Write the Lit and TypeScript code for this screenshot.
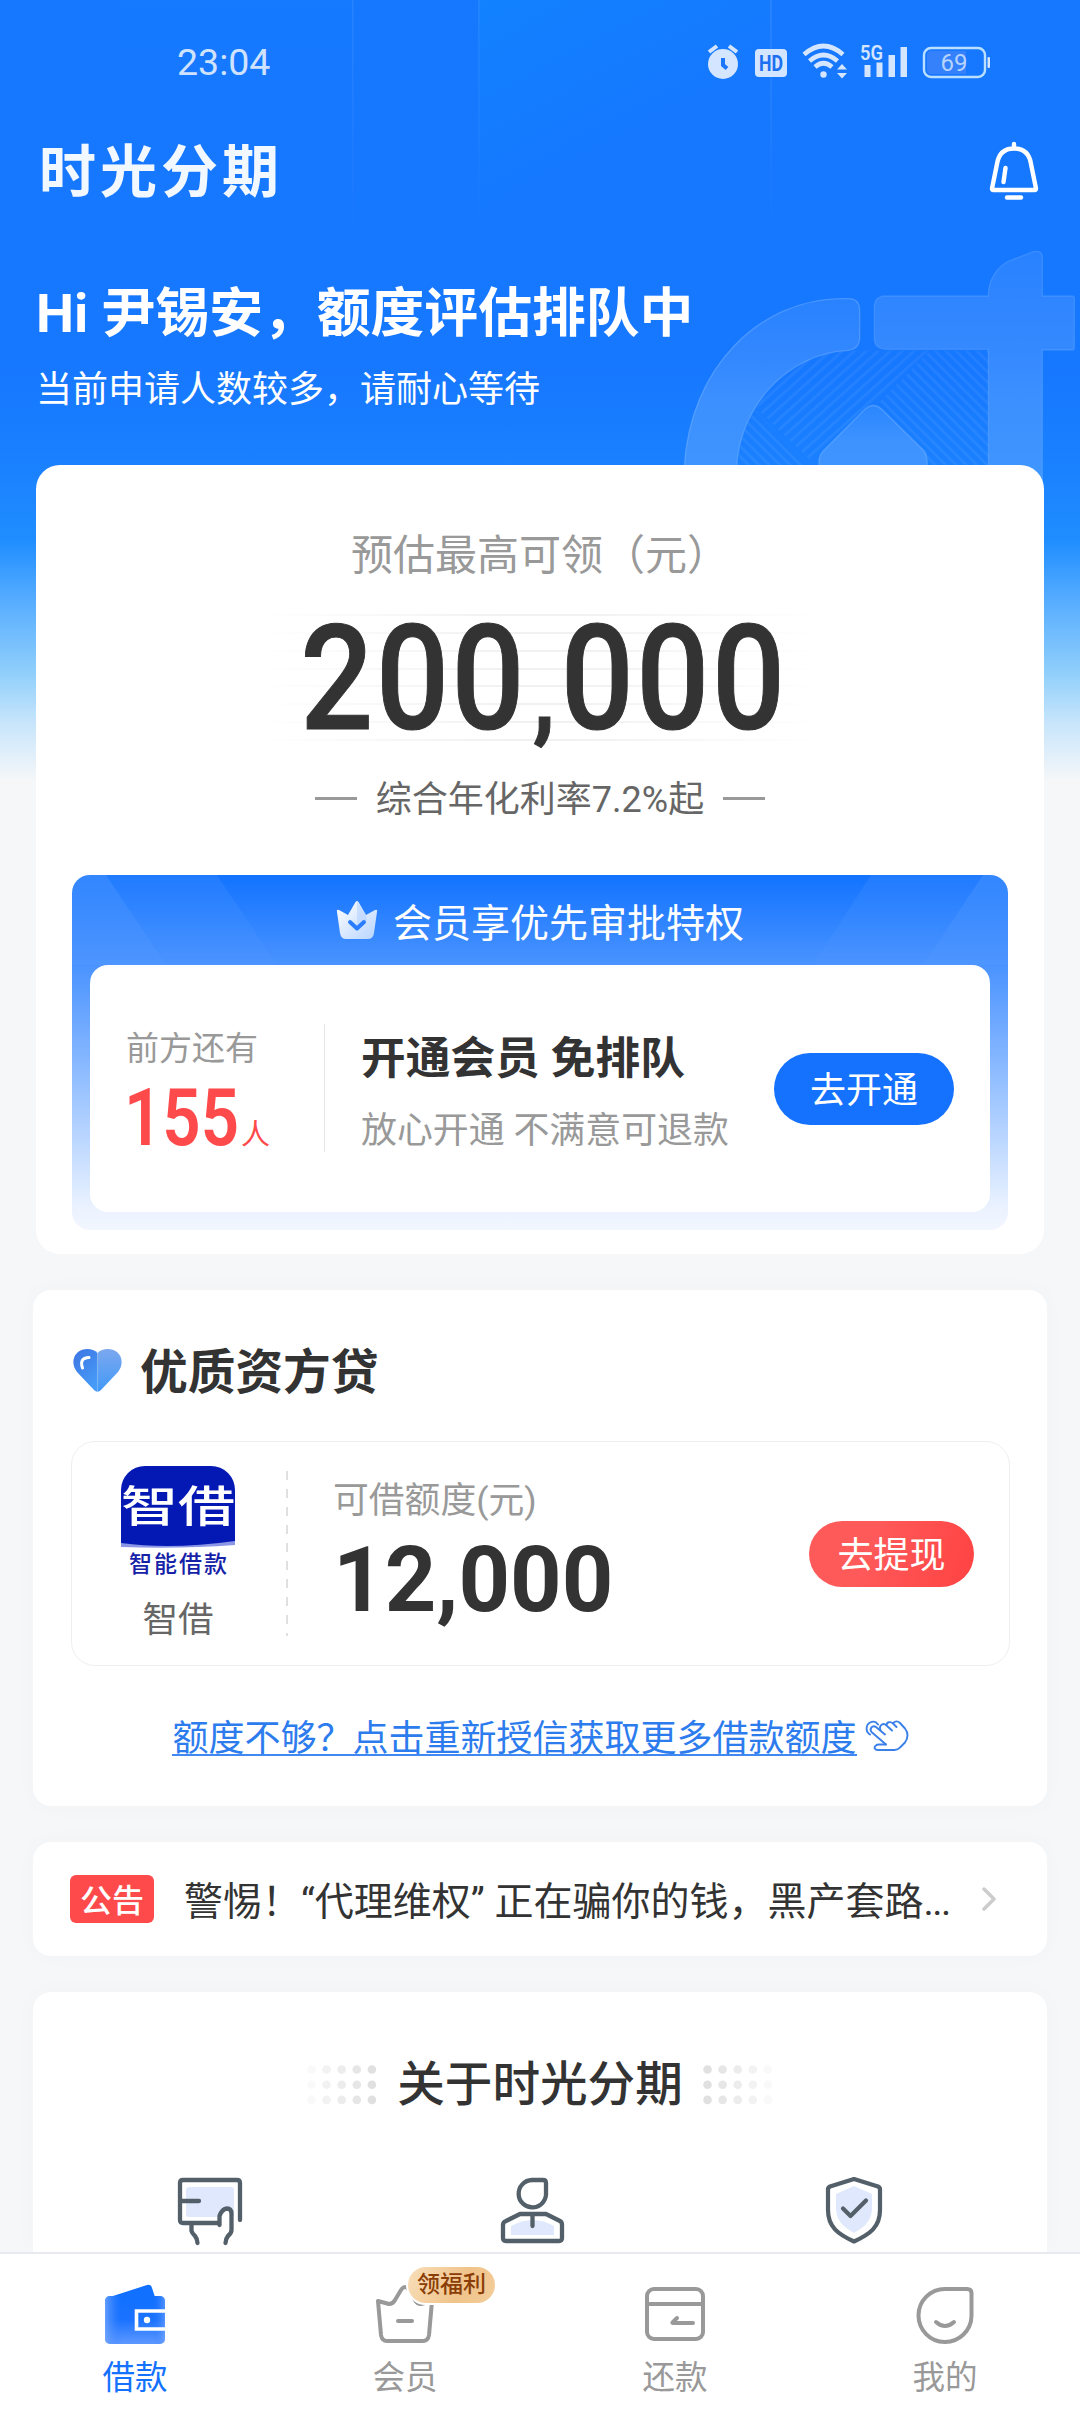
import { LitElement, html, css, svg } from "lit";
import { customElement, property } from "lit/decorators.js";

const statusIcons = svg`
<svg class="status-icons" width="284" height="42" viewBox="707 40 284 42" fill="#d3e5ff">
  <circle cx="723" cy="63" r="15"/>
  <path d="M709 51l8-6M737 51l-8-6" stroke="#d3e5ff" stroke-width="4" fill="none"/>
  <path d="M723 57v7l4 3.500" stroke="#1b76fb" stroke-width="4" fill="none"/>
  <rect x="755" y="48" width="32" height="28" rx="4"/>
  <text x="771" y="70" font-size="22" font-weight="700" fill="#1b6ff0" text-anchor="middle" textLength="24" lengthAdjust="spacingAndGlyphs">HD</text>
  <g fill="none" stroke="#d3e5ff" stroke-width="4.600">
    <path d="M804 53.500Q823.500 36.500 843 53.500"/>
    <path d="M809.500 60Q823.500 48 837.500 60"/>
    <path d="M815 66Q823.500 58.500 832 66"/>
  </g>
  <circle cx="823.500" cy="73.500" r="3.200"/>
  <path d="M842 63l5 5.500h-10zM842 77.500l5-5.500h-10z"/>
  <text x="860" y="59" font-size="21" font-weight="600" textLength="23" lengthAdjust="spacingAndGlyphs">5G</text>
  <rect x="864.500" y="64" width="6" height="12"/><rect x="876.500" y="61.500" width="6" height="14.500"/>
  <rect x="888.500" y="54" width="6.500" height="22"/><rect x="900.500" y="46" width="6.500" height="30"/>
  <rect x="924" y="47" width="61" height="29" rx="7" fill="none" stroke="#b9e0ff" stroke-width="2.400"/>
  <path d="M931 50h35v23h-35a4 4 0 0 1-4-4V54a4 4 0 0 1 4-4z" fill="#3580fb"/>
  <rect x="987.500" y="56" width="2.500" height="11" rx="1"/>
  <text x="954" y="70" font-size="24" text-anchor="middle" fill="#b4d4ff">69</text>
</svg>`;

const bell = svg`
<svg width="50" height="60" viewBox="0 0 50 60" fill="none" stroke="#fff" stroke-width="4.400" stroke-linecap="round" stroke-linejoin="round">
  <path d="M25 3v4M25 7.500C15 7.500 9.500 13 8 23L3 47.500q0 1.500 1.500 1.500h41q1.500 0 1.500-1.500L42 23C40.500 13 35 7.500 25 7.500Z"/>
  <path d="M16.500 27L14.500 41"/><path d="M18 56.500h14"/>
</svg>`;

const watermark = svg`
<svg class="watermark" width="440" height="300" viewBox="0 0 1320 900">
  <defs>
    <pattern id="up" width="24" height="24" patternUnits="userSpaceOnUse" patternTransform="rotate(-42)"><rect width="24" height="8" fill="#fff" opacity=".06"/></pattern>
    <pattern id="down" width="22" height="22" patternUnits="userSpaceOnUse" patternTransform="rotate(45)"><rect width="22" height="8" fill="#fff" opacity=".06"/></pattern>
    <linearGradient id="sheen" x1="0" y1="0" x2="0" y2="1"><stop offset="0" stop-color="#fff" stop-opacity=".08"/><stop offset=".6" stop-color="#fff" stop-opacity=".16"/><stop offset="1" stop-color="#fff" stop-opacity=".16"/></linearGradient>
  </defs>
  <path d="M350 535Q440 370 625 362H870L690 540L510 690Z" fill="url(#up)"/>
  <path d="M870 362H1045V705H862L852 665L710 525Z" fill="url(#down)"/>
  <path d="M345 540L505 705H295Q300 610 345 540Z" fill="url(#down)"/>
  <g fill="url(#sheen)" stroke="#7fb8ff" stroke-opacity=".42" stroke-width="4">
    <path d="M133 710C150 410 360 210 600 206H628Q659 208 659 240V325Q657 358 625 361C440 370 300 530 290 710"/>
    <path d="M537 710V688Q540 672 550 662L675 538Q700 515 725 538L852 662Q862 674 862 710"/>
    <path stroke-opacity=".28" d="M735 198H1045C1045 140 1080 105 1110 92L1180 65Q1207 60 1207 80V198H1298Q1303 198 1303 204V354Q1303 360 1297 360H1207V780H1045V358H737Q703 355 703 327V230Q703 200 735 198Z"/>
  </g>
</svg>`;

const memberCrown = svg`
<svg width="42" height="40" viewBox="0 0 42 40">
  <defs><linearGradient id="cr" x1="0" y1="0" x2="1" y2="1"><stop offset="0" stop-color="#fff"/><stop offset="1" stop-color="#b7d4ff"/></linearGradient></defs>
  <path d="M1 12Q0 9 3 10L12 15L19.500 2Q21 0 22.500 2L30 15L39 10Q42 9 41 12L38 33Q37 39 32 39H10Q5 39 4 33Z" fill="url(#cr)"/>
  <path d="M21 1L30 15L31 20L21 28Z" fill="#a9ccff" opacity=".45"/>
  <path d="M14 22L21 28.500L28 22" fill="none" stroke="#2a7dff" stroke-width="4" stroke-linecap="round" stroke-linejoin="round"/>
</svg>`;

const heart = svg`
<svg class="heart" width="49" height="43" viewBox="0 0 49 43">
  <defs>
    <linearGradient id="hl" x1="0" y1="0" x2=".6" y2="1"><stop offset="0" stop-color="#3d74e2"/><stop offset="1" stop-color="#479bf8"/></linearGradient>
    <linearGradient id="hr" x1="0" y1="0" x2="0" y2="1"><stop offset="0" stop-color="#7ba8ef"/><stop offset="1" stop-color="#4199f8"/></linearGradient>
  </defs>
  <path d="M24.500 4C20-1 10-1 5 3C-1 8-1 17 4 23L21 41Q24.500 44 24.500 42Z" fill="url(#hl)"/>
  <path d="M24.500 4C29-1 39-1 44 3C50 8 50 17 45 23L28 41Q24.500 44 24.500 42Z" fill="url(#hr)"/>
  <path d="M16 8.500Q6 9 9.500 19" fill="none" stroke="#fff" stroke-width="3" stroke-linecap="round"/>
</svg>`;

const hand = svg`
<svg width="44" height="32" viewBox="0 0 44 32" fill="none" stroke="#3a80e8" stroke-width="1.900" stroke-linecap="round" stroke-linejoin="round">
  <path d="M5 14.500C0.500 12 0.500 5 5 2.500C8 1 11 1.500 13 4.500"/>
  <path d="M21 24.500L6.500 12C4 9 7.500 4.500 11 7L20 14.500"/>
  <path d="M15.500 10C13.500 5 18.500 2.500 21.500 5.500L27 10.500M21.500 5.500C21.500 2 25.500 1 28 3.500L31.500 7M28 3.500C29.500 0.500 33 1 35 3L40 8.500C43.500 13 43 18 40 22.500L35 27.500Q33 30 29.500 30H13C9.500 30 8.500 27 11 25.500Q12 24.500 14 24.500H21"/>
</svg>`;

const aboutCard = svg`
<svg width="68" height="70" viewBox="0 0 68 70" fill="none" stroke="#535f69" stroke-width="4.300" stroke-linecap="round" stroke-linejoin="round">
  <rect x="9" y="10" width="48" height="30" rx="3" fill="#e0e8fd" stroke="none"/>
  <path d="M43 46H6Q3 46 3 43V6Q3 3 6 3H60Q63 3 63 6V43M3 24H22"/>
  <path d="M42.500 48V39Q45 32 50 31.500Q54.500 31.500 54.500 37V53Q54.500 56 51 59Q48.500 62 48.500 67V70H40Z" fill="#fff" stroke="none"/>
  <path d="M14.500 47V54Q15 56 18 59Q20.500 62 20.500 66M42.500 48V39Q45 32 50 31.500Q54.500 31.500 54.500 37V53Q54.500 56 51 59Q48.500 62 48.500 66"/>
</svg>`;

const aboutPerson = svg`
<svg width="66" height="68" viewBox="0 0 66 68" fill="none" stroke="#535f69" stroke-width="4.300" stroke-linecap="round" stroke-linejoin="round">
  <path d="M11 58V49Q33 37 54 49V58Z" fill="#e0e8fd" stroke="none"/>
  <path d="M32 3H43Q46 3 46 6V15.500A13.700 13.700 0 1 1 32 3Z"/>
  <path d="M20 37H46L60 44Q62 45 62 48V61Q62 64 59 64H6Q3 64 3 61V48Q3 45 6 44ZM32.500 39V49"/>
</svg>`;

const aboutShield = svg`
<svg width="62" height="70" viewBox="0 1 62 70" fill="none" stroke="#535f69" stroke-width="4.200" stroke-linecap="round" stroke-linejoin="round">
  <path d="M30 10L48 18V32C48 45 40 51 30 57C20 51 12 45 12 32V18Z" fill="#e0e8fd" stroke="none"/>
  <path d="M30 3L54 10.500Q56 11.500 56 13.500V34C56 51 46 58 30 65.500C14 58 4 51 4 34V13.500Q4 11.500 6 10.500Z"/>
  <path d="M19 32.500L26.500 40L42 24.500"/>
</svg>`;

const navIcons = {
  wallet: svg`
<svg width="60" height="60" viewBox="0 0 60 60">
  <defs>
    <linearGradient id="wg" x1="0" y1="0" x2="0" y2="1"><stop offset="0" stop-color="#1170ff"/><stop offset=".5" stop-color="#1a73ff"/><stop offset="1" stop-color="#5e98ff"/></linearGradient>
    <linearGradient id="ws" x1="0" y1="0" x2="1" y2="0"><stop offset="0" stop-color="#79a8ff" stop-opacity=".8"/><stop offset=".28" stop-color="#2a7bff" stop-opacity="0"/><stop offset=".8" stop-color="#2a7bff" stop-opacity="0"/><stop offset="1" stop-color="#79a8ff" stop-opacity=".6"/></linearGradient>
  </defs>
  <path d="M8 12L42 1Q46 0 47 4L50 13Z" fill="#1170ff"/>
  <rect y="12" width="60" height="48" rx="5" fill="url(#wg)"/><rect y="12" width="60" height="48" rx="5" fill="url(#ws)"/>
  <path d="M60 27H31.500V45H60" fill="none" stroke="#fff" stroke-width="3.600"/><circle cx="42" cy="36" r="3.200" fill="#fff"/>
</svg>`,
  crown: svg`
<svg width="60" height="60" viewBox="0 0 60 60" fill="none" stroke="#999" stroke-width="4" stroke-linecap="round" stroke-linejoin="round">
  <path d="M3 17L14 20Q18 20 20 16L26 6Q30 0 34 6L40 16Q42 20 46 20L57 17L54 51Q53 57 48 57H12Q7 57 6 51Z"/><path d="M23 37H37"/>
</svg>`,
  repay: svg`
<svg width="60" height="60" viewBox="0 0 60 60" fill="none" stroke="#999" stroke-width="4" stroke-linecap="round" stroke-linejoin="round">
  <rect x="2" y="5" width="56" height="50" rx="7"/><path d="M2 20H58" stroke-linecap="butt"/><path d="M32 34L27.500 38.500Q27 39 28 39H48"/>
</svg>`,
  me: svg`
<svg width="60" height="60" viewBox="0 0 60 60" fill="none" stroke="#999" stroke-width="4" stroke-linecap="round" stroke-linejoin="round">
  <path d="M30 5H52Q56.500 5 56.500 9V32A26.500 26.500 0 1 1 30 5Z"/><path d="M21 38Q30 46 39 38"/>
</svg>`,
};

type NavIcon = keyof typeof navIcons;

@customElement("nav-item")
class NavItem extends LitElement {
  @property() icon: NavIcon = "wallet";
  @property() label = "";
  @property() badge = "";
  @property({ type: Boolean }) active = false;

  static styles = css`
    :host { display: block; flex: 1; }
    .item { position: relative; display: flex; flex-direction: column; align-items: center; padding-top: 30px; color: #999; }
    .item.active { color: #1472ff; }
    .label { margin-top: 12px; font-size: 32.500px; line-height: 44px; }
    svg { display: block; }
    .badge {
      position: absolute; left: 136px; top: 11px; padding: 0 9px; border: 2px solid #fff;
      border-radius: 21px; background: linear-gradient(115deg, #f8dfbb, #f0c38a 60%, #f3cd9b);
      color: #8a3d06; font-size: 23px; line-height: 36px; font-weight: 500; white-space: nowrap;
    }
  `;

  render() {
    return html`<div class="item ${this.active ? "active" : ""}">
      ${navIcons[this.icon]}
      <span class="label">${this.label}</span>
      ${this.badge ? html`<span class="badge">${this.badge}</span>` : null}
    </div>`;
  }
}

@customElement("dot-grid")
class DotGrid extends LitElement {
  @property({ type: Boolean }) reversed = false;

  static styles = css`
    :host { display: block; }
    svg { display: block; }
  `;

  render() {
    const dots = [];
    for (let row = 0; row < 3; row++)
      for (let col = 0; col < 5; col++) {
        const strength = this.reversed ? 5 - col : col + 1;
        dots.push(svg`<circle cx=${4.5 + col * 15.1} cy=${4.5 + row * 15.2} r="4.300" fill="#d8d8d8" opacity=${strength * 0.16}/>`);
      }
    return html`<svg width="70" height="40" viewBox="0 0 70 40">${dots}</svg>`;
  }
}

@customElement("app-root")
class AppRoot extends LitElement {
  static styles = css`
    :host { display: block; }
    * { box-sizing: border-box; }
    svg { display: block; flex: none; }
    .page {
      position: relative; width: 1080px; height: 2412px; overflow: hidden; display: flex; flex-direction: column;
      font-family: Roboto, "Noto Sans CJK SC", sans-serif; color: #333; background: #f5f7f9; white-space: nowrap;
    }
    .page > * { position: relative; }
    .page > .backdrop {
      position: absolute; left: 0; top: 0; width: 1080px; height: 780px;
      background: linear-gradient(180deg, #1677ff 0, #1677ff 360px, #1a80ff 460px, #1f8dff 540px, #5cb0ff 607px, #90cffb 673px, #c7e5fb 723px, #f5f7f9 780px);
    }
    .beams { position: absolute; left: 0; top: 0; }
    .watermark { position: absolute; left: 640px; top: 230px; }

    .status { height: 126px; display: flex; align-items: center; justify-content: space-between; padding: 0 89px 2px 177px; }
    .time { font-size: 37.500px; line-height: 44px; color: #cfe2ff; }
    .brand-bar { height: 90px; display: flex; align-items: center; justify-content: space-between; padding: 0 41px 0 39px; }
    .brand { margin-top: 4px; font-size: 57px; line-height: 60px; font-weight: 700; letter-spacing: 4px; color: #f2f8ff; }
    .greeting { margin: 62px 36px 0; color: #fff; }
    .greeting h1 { margin: 0; font-size: 53.800px; line-height: 72px; font-weight: 700; }
    .greeting p { margin: 15px 0 1px; font-size: 36px; line-height: 50px; }

    .card { margin: 36px 33px 0; background: #fff; border-radius: 18px; box-shadow: 0 0 24px rgba(40, 50, 70, .025); }
    .quota { height: 789px; margin: 49px 36px 0; border-radius: 24px; padding-top: 61px; display: flex; flex-direction: column; align-items: center; box-shadow: none; }
    .greeting + .quota { margin-top: 49px; }
    .quota-label { font-size: 42px; line-height: 60px; color: #999; }
    .amount {
      margin-top: 28px; width: 560px; height: 128px; display: flex; align-items: center; justify-content: center;
      background:
        linear-gradient(90deg, #fff, rgba(255, 255, 255, 0) 45%, rgba(255, 255, 255, 0) 55%, #fff),
        repeating-linear-gradient(180deg, #f1f1f3 0, #f1f1f3 2px, #fff 2px, #fff 17.850px);
    }
    .amount span { display: flex; align-items: baseline; margin: 17px 0 0 7px; font-size: 146px; line-height: 128px; font-weight: 500; letter-spacing: 3px; transform: scaleX(.88); -webkit-text-stroke: 1px #333; }
    .amount small { width: 38px; font-size: 104px; font-weight: 700; text-align: center; letter-spacing: 0; }
    .rate { margin-top: 33px; display: flex; align-items: center; gap: 19px; font-size: 36px; line-height: 50px; color: #666; }
    .rate i { width: 42px; height: 3px; background: #999; margin-top: -3px; }

    .member { align-self: stretch; margin: 50px 36px 0; height: 355px; padding: 0 18px; border-radius: 18px; position: relative; overflow: hidden;
      background: linear-gradient(180deg, #1273ff 0, #4a93ff 90px, #82b5ff 180px, #b8d5ff 260px, #ecf3ff 335px, #f2f6ff 100%); }
    .member-rays { position: absolute; left: 0; top: 0; }
    .member-head { position: relative; height: 90px; display: flex; align-items: center; justify-content: center; gap: 15px; color: #fff; font-size: 39px; }
    .member-body { position: relative; height: 247px; padding: 59px 36px 0; border-radius: 18px; background: #fff; display: flex; align-items: flex-start; }
    .queue { width: 198px; }
    .queue-label { padding-top: 1px; font-size: 33px; line-height: 48px; color: #999; }
    .queue-count { margin-top: 13px; display: flex; align-items: baseline; line-height: 64px; color: #ff4a4c; }
    .queue-count b { width: 117px; margin-left: -2px; font-size: 79px; font-weight: 600; transform: scaleX(.85); transform-origin: 0 50%; }
    .queue-count span { font-size: 29px; }
    .rule { width: 1px; height: 128px; background: #e6e6e6; }
    .offer { margin: 5px 0 0 36px; flex: 1; }
    .offer-title { font-size: 44.700px; line-height: 60px; font-weight: 700; }
    .offer-sub { margin-top: 17px; font-size: 35.900px; line-height: 50px; color: #999; }
    .pill { border-radius: 40px; color: #fff; text-align: center; font-size: 36px; }
    .pill.open { margin-top: 29px; width: 180px; height: 72px; line-height: 77px; background: #1472ff; }
    .pill.cash { width: 165px; height: 66px; line-height: 71px; background: linear-gradient(110deg, #ff5a5a 35%, #ff4242); }

    .lender { height: 516px; padding: 53px 37px 0 38px; }
    .lender-head { display: flex; align-items: center; gap: 18px; padding-left: 2px; font-size: 47.700px; line-height: 60px; font-weight: 700; height: 60px; }
    .heart { margin-top: -6px; }
    .product { margin-top: 38px; height: 225px; border: 1px solid #efefef; border-radius: 24px; display: flex; padding: 24px 35px 0 0; }
    .app { width: 214px; padding-right: 2px; display: flex; flex-direction: column; align-items: center; }
    .app-icon { width: 114px; }
    .app-tile { height: 81px; border-radius: 24px 24px 0 0; background: #0419b4; color: #fff; display: flex; justify-content: center; }
    .app-tile span { font-size: 57px; line-height: 83px; transform: scaleY(.76); font-weight: 500; }
    .app-wave { margin-top: -7px; position: relative; }
    .app-tag { font-size: 23px; line-height: 31px; letter-spacing: 2px; color: #1522a8; text-align: center; font-weight: 500; margin: 1px -2px 0 0; }
    .app-name { margin-top: 17px; font-size: 35.500px; line-height: 46px; color: #666; }
    .dash { margin-top: 5px; width: 2px; height: 165px; background: repeating-linear-gradient(180deg, #e0e0e0 0, #e0e0e0 9px, #fff 9px, #fff 18px); }
    .limit { flex: 1; padding: 10px 0 0 45px; }
    .limit-label { font-size: 35.800px; line-height: 50px; color: #999; }
    .limit-value { font-size: 90px; line-height: 90px; font-weight: 700; margin-top: 10px; }
    .product .pill { margin-top: 55px; }
    .more { margin-top: 48px; display: flex; justify-content: center; align-items: flex-start; gap: 8px; font-size: 36px; line-height: 50px; color: #2d7cee; height: 50px; }
    .more span { height: 42px; border-bottom: 2px solid #4089f2; }
    .more svg { margin-top: 6px; }

    .notice { height: 114px; display: flex; align-items: center; padding: 0 51px 0 37px; }
    .tag { width: 84px; height: 48px; border-radius: 6px; background: #ff4a4c; color: #fff; font-size: 32px; line-height: 52px; text-align: center; font-weight: 500; }
    .notice-text { margin: 6px 0 0 30px; flex: 1; font-size: 39px; line-height: 54px; }
    .notice-text i { font-style: normal; letter-spacing: -1.500px; }

    .about { flex: 1; border-radius: 18px 18px 0 0; padding-top: 63px; }
    .about-head { display: flex; align-items: center; justify-content: center; gap: 20px; font-size: 47.600px; line-height: 60px; font-weight: 500; }
    .features { margin-top: 62px; padding-left: 17px; display: flex; align-items: flex-start; }
    .features div { width: 322px; flex: none; display: flex; justify-content: center; }

    .tabs { height: 160px; flex: none; background: #fff; border-top: 2px solid #e8eaef; display: flex; }
  `;

  render() {
    return html`
      <div class="page">
        <div class="backdrop">
          <svg class="beams" width="1080" height="260" viewBox="0 0 1080 260">
            <defs>
              <linearGradient id="fade" x1="0" y1="0" x2="0" y2="1"><stop offset="0" stop-color="#06a0ff" stop-opacity=".22"/><stop offset="1" stop-color="#06a0ff" stop-opacity="0"/></linearGradient>
              <linearGradient id="beam" x1="0" y1="0" x2=".7" y2="1"><stop offset="0" stop-color="#06a0ff" stop-opacity=".26"/><stop offset=".75" stop-color="#06a0ff" stop-opacity="0"/></linearGradient>
              <linearGradient id="edge" x1="0" y1="0" x2="0" y2="1"><stop offset="0" stop-color="#6fb0ff" stop-opacity=".2"/><stop offset="1" stop-color="#6fb0ff" stop-opacity="0"/></linearGradient>
            </defs>
            <rect x="120" width="233" height="120" fill="url(#fade)" opacity=".3"/>
            <rect x="479" width="292" height="220" fill="url(#beam)"/>
            <rect x="352" width="1.500" height="260" fill="url(#edge)"/><rect x="478" width="1.500" height="240" fill="url(#edge)"/><rect x="770" width="2" height="240" fill="url(#edge)"/>
          </svg>
          ${watermark}
        </div>

        <header class="status"><span class="time">23:04</span>${statusIcons}</header>
        <div class="brand-bar"><span class="brand">时光分期</span>${bell}</div>
        <section class="greeting"><h1>Hi 尹锡安，额度评估排队中</h1><p>当前申请人数较多，请耐心等待</p></section>

        <section class="card quota">
          <div class="quota-label">预估最高可领（元）</div>
          <div class="amount"><span>200<small>,</small>000</span></div>
          <div class="rate"><i></i>综合年化利率7.2%起<i></i></div>
          <div class="member">
            <svg class="member-rays" width="936" height="90" viewBox="0 0 936 90">
              <defs><linearGradient id="ray" gradientUnits="userSpaceOnUse" x1="0" y1="0" x2="0" y2="90"><stop offset="0" stop-color="#fff"/><stop offset="1" stop-color="#fff" stop-opacity=".15"/></linearGradient></defs>
              <path d="M0 0H34L94 90H0ZM936 0H911L851 90H936Z" fill="url(#ray)" opacity=".14"/>
              <path d="M34 0H145L205 90H94ZM911 0H799L741 90H851Z" fill="url(#ray)" opacity=".06"/>
            </svg>
            <div class="member-head">${memberCrown}会员享优先审批特权</div>
            <div class="member-body">
              <div class="queue">
                <div class="queue-label">前方还有</div>
                <div class="queue-count"><b>155</b><span>人</span></div>
              </div>
              <div class="rule"></div>
              <div class="offer">
                <div class="offer-title">开通会员 免排队</div>
                <div class="offer-sub">放心开通 不满意可退款</div>
              </div>
              <div class="pill open">去开通</div>
            </div>
          </div>
        </section>

        <section class="card lender">
          <div class="lender-head">${heart}优质资方贷</div>
          <div class="product">
            <div class="app">
              <div class="app-icon">
                <div class="app-tile"><span>智借</span></div>
                <svg class="app-wave" width="114" height="8" viewBox="0 0 114 8"><path d="M0 3Q50 10 114 1V8H0Z" fill="#8c96e6"/><path d="M0 7Q60 9 114 5V8H0Z" fill="#fff"/></svg>
                <div class="app-tag">智能借款</div>
              </div>
              <div class="app-name">智借</div>
            </div>
            <div class="dash"></div>
            <div class="limit"><div class="limit-label">可借额度(元)</div><div class="limit-value">12,000</div></div>
            <div class="pill cash">去提现</div>
          </div>
          <div class="more"><span>额度不够？点击重新授信获取更多借款额度</span>${hand}</div>
        </section>

        <section class="card notice">
          <span class="tag">公告</span>
          <span class="notice-text">警惕！“代理维权” 正在骗你的钱，黑产套路<i>...</i></span>
          <svg width="14" height="26" viewBox="0 0 14 26" fill="none" stroke="#ccc" stroke-width="3.500" stroke-linecap="round" stroke-linejoin="round"><path d="M2 3L12 13L2 23"/></svg>
        </section>

        <section class="card about">
          <div class="about-head"><dot-grid></dot-grid>关于时光分期<dot-grid reversed></dot-grid></div>
          <div class="features"><div>${aboutCard}</div><div>${aboutPerson}</div><div>${aboutShield}</div></div>
        </section>

        <nav class="tabs">
          <nav-item icon="wallet" label="借款" active></nav-item>
          <nav-item icon="crown" label="会员" badge="领福利"></nav-item>
          <nav-item icon="repay" label="还款"></nav-item>
          <nav-item icon="me" label="我的"></nav-item>
        </nav>
      </div>
    `;
  }
}
